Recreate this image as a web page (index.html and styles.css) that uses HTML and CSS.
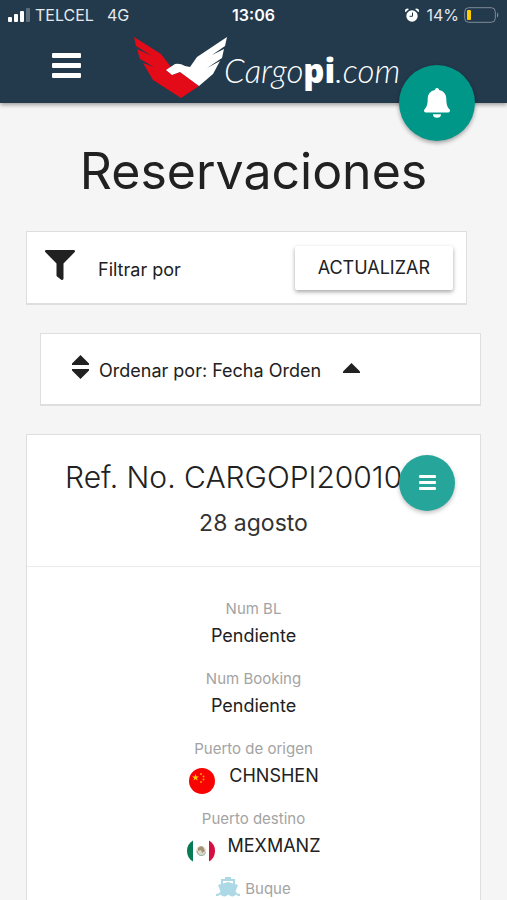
FILE: index.html
```html
<!DOCTYPE html>
<html lang="es">
<head>
<meta charset="utf-8">
<meta name="viewport" content="width=device-width, initial-scale=1">
<title>Reservaciones</title>
<link rel="stylesheet" href="styles.css">
</head>
<body>
<header class="topbar">
  <div class="status">
    <div class="status-side">
      <svg class="signal" viewBox="0 0 22 14" aria-hidden="true">
        <rect x="0" y="9" width="4" height="5" rx="1"/><rect x="6" y="6" width="4" height="8" rx="1"/><rect x="12" y="3" width="4" height="11" rx="1"/><rect class="dim" x="18" y="0" width="4" height="14" rx="1"/>
      </svg>
      <span>TELCEL</span><span class="network">4G</span>
    </div>
    <span class="clock">13:06</span>
    <div class="status-side status-right">
      <svg class="alarm" viewBox="0 0 14 14" aria-hidden="true">
        <circle cx="7" cy="8" r="5.7"/><path d="M.5 4.2A2.4 2.4 0 0 1 4 1z M13.5 4.2A2.4 2.4 0 0 0 10 1z"/><path class="hands" d="M7.5 4.5V8.3H4.5"/>
      </svg>
      <span>14%</span>
      <svg class="battery" viewBox="0 0 35 16" aria-hidden="true">
        <rect class="case" x=".7" y=".7" width="30.6" height="14.6" rx="4"/><rect class="charge" x="3" y="3" width="4" height="10" rx="1"/><path class="tip" d="M33 5.5a3 3 0 0 1 0 5z"/>
      </svg>
    </div>
  </div>
  <div class="brandbar">
    <button class="menu" type="button" aria-label="Menú">
      <svg viewBox="0 0 29 26" aria-hidden="true"><rect y="0" width="29" height="5" rx="1"/><rect y="10" width="29" height="5" rx="1"/><rect y="20" width="29" height="5" rx="1"/></svg>
    </button>
    <a class="logo" href="#">
      <svg class="wings" viewBox="0 0 94 62" aria-hidden="true">
        <path class="red" d="M0 0 27 17 37 30 32 33 38 38 46 35 65 49 47 61 19 43 9 26 20 30 6 22 3 12 18 19 2 9Z"/>
        <path class="white" d="M32 33 41 27Q46 26 51 29L56 30 63 20 93 0 91 9 78 18 90 12 88 21 73 31 86 24 79 37 65 49 46 35 38 38Z"/>
      </svg>
      <span class="wordmark">Cargo<b>pi</b>.com</span>
    </a>
  </div>
  <button class="bell" type="button" aria-label="Notificaciones">
    <svg viewBox="0 0 26 30" aria-hidden="true"><path d="M13 0c1.200 0 2 .8 2 1.900 4.600.9 7.300 4.300 7.300 8.700 0 6.400 1.200 8.700 3.400 11 .8 1 .2 2.900-1.400 2.900H1.700C.1 24.500-.5 22.600.3 21.600c2.200-2.300 3.400-4.600 3.400-11 0-4.400 2.700-7.800 7.300-8.700C11 .8 11.800 0 13 0ZM9 26.200h8A4 3.600 0 0 1 9 26.200Z"/></svg>
  </button>
</header>
<main class="content">
  <h1>Reservaciones</h1>
  <section class="panel filter">
    <svg class="funnel" viewBox="0 0 30 30" aria-hidden="true"><path d="M1.400 0H28.600C30 0 30.400 1.400 29.500 2.300L18.500 13.500V28.600C18.500 30 17.200 30.300 16.300 29.700L12 26.600Q11.500 26.200 11.500 25.500V13.500L.5 2.300C-.4 1.400 0 0 1.400 0Z"/></svg>
    <span>Filtrar por</span>
    <button class="refresh" type="button">ACTUALIZAR</button>
  </section>
  <section class="panel sort">
    <svg class="sorter" viewBox="0 0 17 24" aria-hidden="true"><path d="M8.500 0 17 8.500V10H0V8.500ZM0 14H17V15.500L8.500 24 0 15.500Z"/></svg>
    <span>Ordenar por: Fecha Orden</span>
    <svg class="caret" viewBox="0 0 17 10" aria-hidden="true"><path d="M8.500 0 17 8.500V10H0V8.500Z"/></svg>
  </section>
  <article class="panel booking">
    <div class="booking-head">
      <h2>Ref. No. CARGOPI20010</h2>
      <p>28 agosto</p>
      <button class="options" type="button" aria-label="Opciones">
        <svg viewBox="0 0 17 16" aria-hidden="true"><rect width="17" height="3" rx="1"/><rect y="6" width="17" height="3" rx="1"/><rect y="12" width="17" height="3" rx="1"/></svg>
      </button>
    </div>
    <dl class="details">
      <div><dt>Num BL</dt><dd>Pendiente</dd></div>
      <div><dt>Num Booking</dt><dd>Pendiente</dd></div>
      <div><dt>Puerto de origen</dt>
        <dd class="port"><svg class="flag" viewBox="0 0 28 28" aria-hidden="true"><circle cx="14" cy="14" r="13" fill="#f90202"/><path fill="#ffd000" d="m7.500 7 .9 2.400 2.500.1-2 1.600.7 2.500-2.100-1.500-2.100 1.500.7-2.500-2-1.600 2.500-.1z"/><g fill="#ff9d00"><circle cx="13" cy="7" r="1"/><circle cx="15.500" cy="9.500" r="1"/><circle cx="15.500" cy="12.500" r="1"/><circle cx="13" cy="15" r="1"/></g></svg><span>CHNSHEN</span></dd></div>
      <div><dt>Puerto destino</dt>
        <dd class="port"><svg class="flag" viewBox="0 0 28 28" aria-hidden="true"><path fill="#087a55" d="M6 3.500V24.500Q0 21 0 14T6 3.500Z"/><path fill="#d3103f" d="M22 3.500V24.500Q28 21 28 14T22 3.500Z"/><circle cx="14" cy="14" r="5" fill="#dedacf"/><path fill="#a39372" d="M11 11q3-3 5-1l2 4-3 2-1-3-3 1z"/><path fill="none" stroke="#8fb5a0" d="M10 14q1 5 5 4.500 3 0 3.500-3"/></svg><span>MEXMANZ</span></dd></div>
      <div><dt class="vessel"><svg class="ship" viewBox="0 0 24 20" aria-hidden="true"><path d="M9 0h6v2h4v5l3 1-2.500 6.500Q21 17 24 17v2q-3 0-4-1.500Q18 20 16 19.500T12 17.500Q10 20 8 19.500T4 17.500Q3 19 0 19v-2q3 0 4.500-2.500L2 8l3-1V2h4ZM7 4v2.500L12 5l5 1.500V4Z"/></svg><span>Buque</span></dt></div>
    </dl>
  </article>
</main>
</body>
</html>
```
FILE: styles.css
```css
* { box-sizing: border-box; }

body {
  margin: 0;
  height: 100vh;
  overflow: hidden;
  display: flex;
  flex-direction: column;
  background: #f5f5f5;
  color: #212121;
  font-family: Inter, "Liberation Sans", sans-serif;
  font-size: 18px;
  line-height: 24px;
}

button {
  border: 0;
  padding: 0;
  font: inherit;
  color: inherit;
  cursor: pointer;
}

svg { display: block; flex: none; }

.topbar {
  position: relative;
  z-index: 1;
  flex: none;
  padding: 3px 8px 4px;
  background: #23394c;
  color: #e4e9ed;
  fill: #fff;
  box-shadow: 0 2px 4px rgba(0, 0, 0, .35);
}

.status {
  display: flex;
  align-items: center;
  font-size: 16px;
}

.status-side {
  flex: 1;
  display: flex;
  align-items: center;
  gap: 5px;
}

.status-right { justify-content: flex-end; }
.network { margin-left: 8px; }
.clock { font-weight: 600; color: #fff; }
.signal { width: 22px; height: 14px; }
.signal .dim { fill: #5c6d7b; }
.alarm { width: 14px; height: 14px; margin-right: 2px; }
.hands { fill: none; stroke: #23394c; }
.battery { width: 35px; height: 16px; }
.case { fill: none; stroke: #7e8c98; }
.charge { fill: #fc0; }
.tip { fill: #7e8c98; }

.brandbar {
  display: flex;
  align-items: center;
  height: 72px;
  padding: 10px 0 0 44px;
}

.menu { background: none; }
.menu svg { width: 29px; height: 26px; margin-bottom: 5px; }

.logo {
  display: flex;
  align-items: center;
  margin-left: 53px;
  color: #fff;
  text-decoration: none;
}

.wings { width: 94px; height: 62px; }
.red { fill: #e30b17; }

.wordmark {
  margin: 4px 0 0 -4px;
  font: italic 300 33px/48px Lato, sans-serif;
}

.wordmark b {
  font-family: "Open Sans", sans-serif;
  font-style: normal;
  font-weight: 800;
}

.bell {
  position: absolute;
  right: 32px;
  bottom: -38px;
  display: grid;
  place-items: center;
  width: 76px;
  height: 76px;
  border-radius: 50%;
  background: #009688;
  box-shadow: 0 2px 4px rgba(0, 0, 0, .35);
}

.bell svg { width: 26px; height: 30px; }

.content {
  flex: 1;
  min-height: 0;
  overflow-y: auto;
  scrollbar-width: none;
  padding: 36px 26px 0;
  fill: #212121;
}

h1, h2, p, dl, dd { margin: 0; }

h1 {
  margin-bottom: 28px;
  font-size: 50px;
  font-weight: 400;
  line-height: 64px;
  text-align: center;
}

.panel {
  background: #fff;
  border: 1px solid #dedede;
  border-width: 1px 1px 2px;
}

.filter {
  display: flex;
  align-items: center;
  height: 74px;
  margin: 0 14px 28px 0;
  padding: 0 13px 0 18px;
}

.funnel { width: 30px; height: 30px; margin: 0 23px 6px 0; }
.filter span { margin-top: 4px; }

.refresh {
  height: 44px;
  margin-left: auto;
  padding: 0 23px;
  border-radius: 2px;
  background: #fff;
  box-shadow: 0 2px 4px rgba(0, 0, 0, .35);
}

.sort {
  display: flex;
  align-items: center;
  height: 73px;
  margin: 0 0 28px 14px;
  padding: 0 31px;
}

.sorter { width: 17px; height: 24px; margin: 0 10px 5px 0; }
.sort span { margin-top: 4px; }
.caret { width: 17px; height: 10px; margin: 0 0 2px 22px; }

.booking-head {
  position: relative;
  padding: 22px 38px 27px;
  border-bottom: 1px solid #ececec;
  text-align: center;
}

h2 {
  font-size: 30px;
  font-weight: 300;
  line-height: 40px;
  text-align: left;
  white-space: nowrap;
}

.booking-head p {
  margin-top: 10px;
  font-size: 23px;
  line-height: 32px;
  color: #333;
}

.options {
  position: absolute;
  top: 20px;
  right: 25px;
  display: grid;
  place-items: center;
  width: 56px;
  height: 56px;
  border-radius: 50%;
  background: #26a69a;
  fill: #fff;
  box-shadow: 0 2px 4px rgba(0, 0, 0, .25);
}

.options svg { width: 17px; height: 16px; }

.details {
  display: grid;
  gap: 16px;
  padding: 30px 24px;
  text-align: center;
}

dt {
  font-size: 15px;
  color: #a3a3a3;
}

dd { line-height: 30px; }

.port, .vessel {
  display: flex;
  justify-content: center;
}

.port { height: 30px; gap: 13px; }
.flag { width: 28px; height: 28px; margin-top: 6px; }
.vessel { gap: 5px; }
.ship { width: 24px; height: 20px; fill: #add8e6; }
```
